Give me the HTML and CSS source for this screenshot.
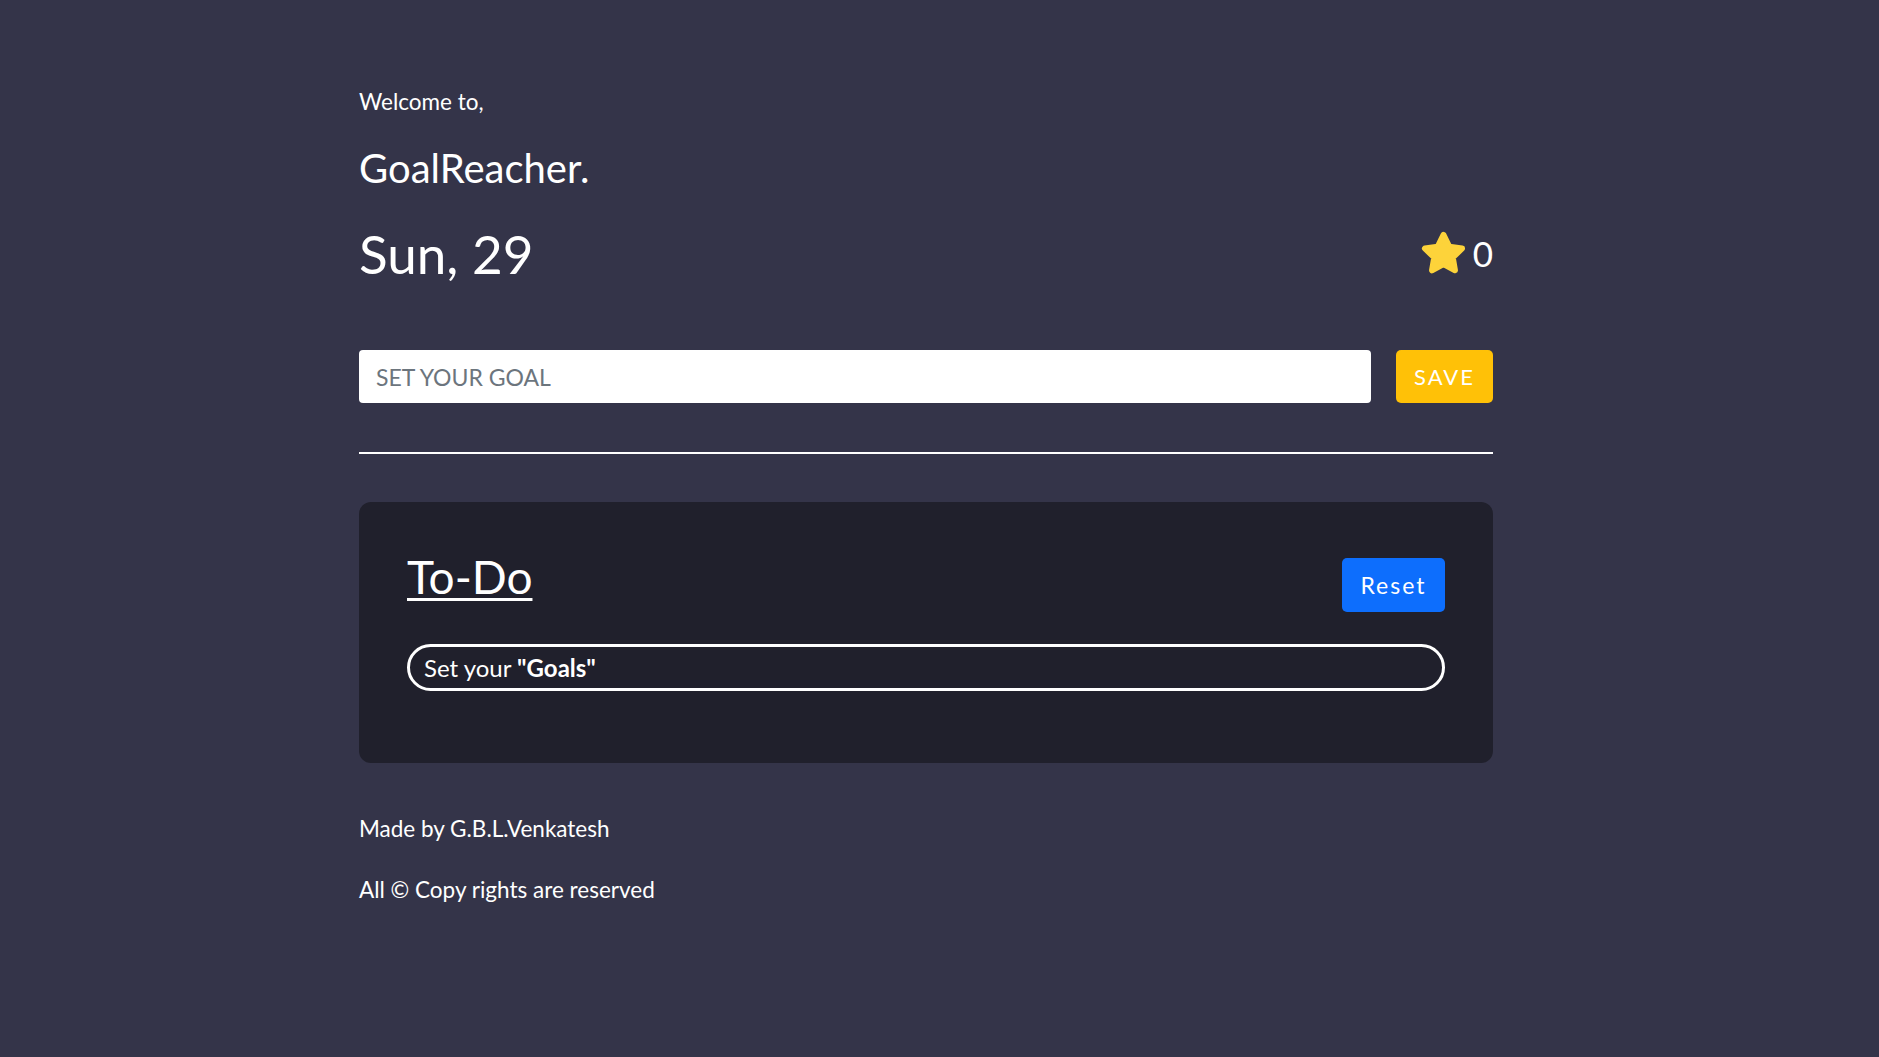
FILE: index.html
```html
<!DOCTYPE html>
<html lang="en">
<head>
<meta charset="utf-8">
<title>GoalReacher</title>
<link rel="stylesheet" href="styles.css">
</head>
<body>
<main class="page">
  <header class="intro">
    <p class="welcome">Welcome to,</p>
    <h1 class="brand">GoalReacher.</h1>
    <div class="date-row">
      <h2 class="date">Sun, 29</h2>
      <div class="score">
        <svg class="star" viewBox="0 0 24 24" aria-hidden="true">
          <polygon points="12,2.5 14.94,8.45 21.51,9.41 16.76,14.05 17.88,20.59 12,17.5 6.12,20.59 7.24,14.05 2.49,9.41 9.06,8.45" />
        </svg>
        <span class="score-value">0</span>
      </div>
    </div>
  </header>

  <form class="goal-form">
    <input class="goal-input" type="text" placeholder="SET YOUR GOAL">
    <button class="save-btn" type="button">SAVE</button>
  </form>

  <hr class="divider">

  <section class="card">
    <div class="card-head">
      <h2 class="todo-title">To-Do</h2>
      <button class="reset-btn" type="button">Reset</button>
    </div>
    <ul class="goal-list">
      <li class="goal-item">Set your <b>"Goals"</b></li>
    </ul>
  </section>

  <footer class="footer">
    <p class="footer-line">Made by G.B.L.Venkatesh</p>
    <p class="footer-line">All © Copy rights are reserved</p>
  </footer>
</main>
</body>
</html>
```
FILE: styles.css
```css
* { box-sizing: border-box; }

html, body {
  margin: 0;
  padding: 0;
  background: #343449;
  color: #ffffff;
  font-family: "Lato", "Open Sans", sans-serif;
}

body { min-height: 1057px; }

.page {
  width: 1134px;
  margin-left: 359px;
  padding-top: 91px;
  padding-bottom: 120px;
}

.welcome {
  margin: 0;
  font-size: 22.5px;
  line-height: 22px;
}

.brand {
  margin: 35px 0 0;
  font-size: 40px;
  line-height: 40px;
  font-weight: 400;
}

.date-row {
  margin-top: 39px;
  display: flex;
  justify-content: space-between;
  align-items: center;
}

.date {
  margin: 0;
  font-size: 53px;
  line-height: 53px;
  font-weight: 400;
}

.score {
  display: flex;
  align-items: center;
  gap: 6px;
}

.star {
  width: 47px;
  height: 47px;
  display: block;
}

.star polygon {
  fill: #fdd33a;
  stroke: #fdd33a;
  stroke-width: 3;
  stroke-linejoin: round;
}

.score-value {
  font-size: 35px;
  line-height: 35px;
}

.goal-form {
  margin-top: 70px;
  display: flex;
  gap: 25px;
}

.goal-input {
  flex: 1;
  height: 53px;
  border: 0;
  border-radius: 4px;
  padding: 0 17px;
  background: #ffffff;
  font-family: inherit;
  font-size: 23px;
  color: #212529;
  outline: none;
}

.goal-input::placeholder {
  color: #6c757d;
}

.save-btn {
  width: 97px;
  height: 53px;
  border: 0;
  border-radius: 5px;
  background: #ffc107;
  color: #ffffff;
  font-family: inherit;
  font-size: 22px;
  letter-spacing: 2px;
  padding: 0;
}

.divider {
  margin: 49px 0 0;
  border: 0;
  height: 2px;
  background: #ffffff;
}

.card {
  margin-top: 48px;
  background: #20202c;
  border-radius: 12px;
  padding: 52px 48px 72px;
}

.card-head {
  display: flex;
  justify-content: space-between;
  align-items: flex-start;
}

.todo-title {
  margin: 0;
  font-size: 46px;
  line-height: 46px;
  font-weight: 400;
  text-decoration: underline;
  text-decoration-thickness: 3px;
  text-underline-offset: 4px;
}

.reset-btn {
  margin-top: 4px;
  width: 103px;
  height: 54px;
  border: 0;
  border-radius: 5px;
  background: #0d6efd;
  color: #ffffff;
  font-family: inherit;
  font-size: 23px;
  letter-spacing: 2px;
  padding: 0;
}

.goal-list {
  list-style: none;
  margin: 32px 0 0;
  padding: 0;
}

.goal-item {
  height: 47px;
  border: 3px solid #ffffff;
  border-radius: 24px;
  padding: 0 14px;
  display: flex;
  align-items: center;
  font-size: 24px;
  white-space: pre;
}

.goal-item b { font-weight: 700; }

.footer {
  margin-top: 55px;
}

.footer-line {
  margin: 0;
  font-size: 22.5px;
  line-height: 22px;
}

.footer-line + .footer-line {
  margin-top: 39px;
}
```
